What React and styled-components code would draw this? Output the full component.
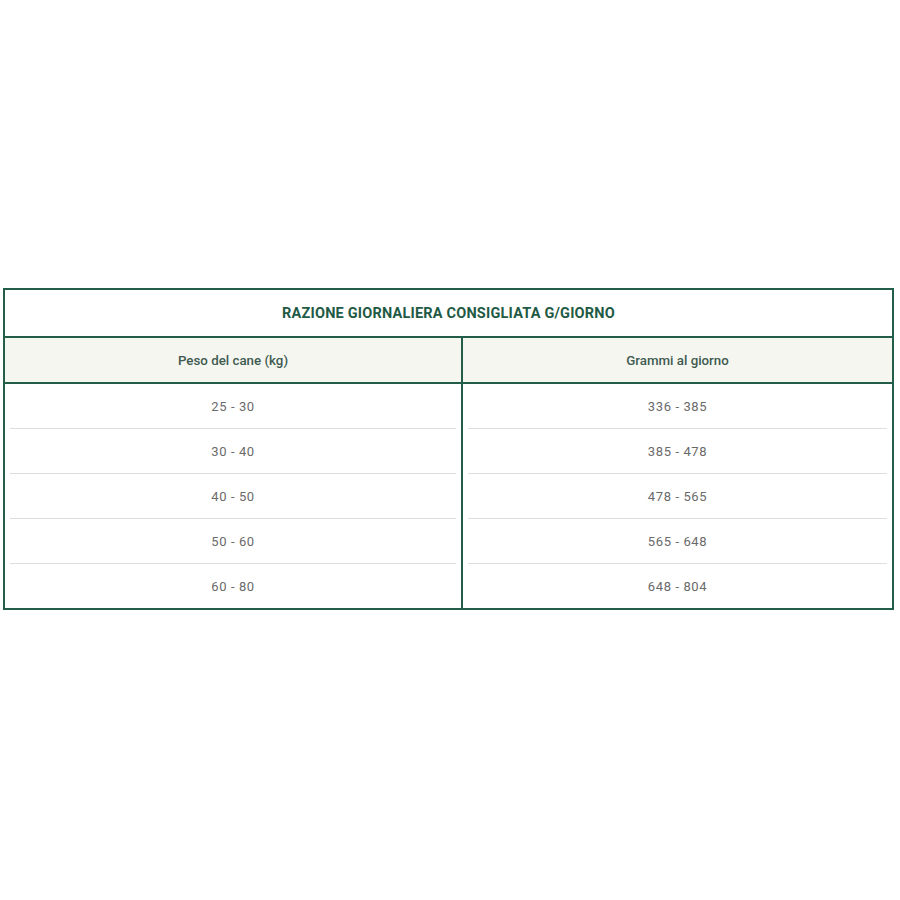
import React from 'react';
import styled, { createGlobalStyle } from 'styled-components';

const GlobalStyle = createGlobalStyle`
  body {
    margin: 0;
    background: #fff;
    font-family: Roboto, "Liberation Sans", sans-serif;
  }
`;

const Page = styled.div`
  padding: 288px 0 0 3px;
`;

const Table = styled.table`
  width: 891px;
  border-collapse: collapse;
  border: 2px solid #235e4b;
  table-layout: fixed;
`;

const LeftCol = styled.col`
  width: 458px;
`;

const Title = styled.th`
  height: 46px;
  padding: 0;
  border-bottom: 2px solid #235e4b;
  color: #1f5a45;
  font-size: 14.5px;
  font-weight: 700;
  letter-spacing: 0.2px;
  text-align: center;
`;

const Head = styled.th`
  height: 44px;
  padding: 0;
  background: #f6f6f0;
  border-bottom: 2px solid #235e4b;
  border-left: ${p => (p.$divider ? '2px solid #235e4b' : 'none')};
  color: #3e5b50;
  font-size: 13.3px;
  font-weight: 500;
  text-align: center;
`;

const Cell = styled.td`
  padding: 0 5px;
  border-left: ${p => (p.$divider ? '2px solid #235e4b' : 'none')};
`;

const CellInner = styled.div`
  height: 44px;
  display: flex;
  align-items: center;
  justify-content: center;
  border-bottom: ${p => (p.$last ? 'none' : '1px solid #dedede')};
  color: #6a6a6a;
  font-size: 13px;
  letter-spacing: 0.6px;
`;

const rows = [
  ['25 - 30', '336 - 385'],
  ['30 - 40', '385 - 478'],
  ['40 - 50', '478 - 565'],
  ['50 - 60', '565 - 648'],
  ['60 - 80', '648 - 804'],
];

export default function App() {
  return (
    <Page>
      <GlobalStyle />
      <Table>
        <colgroup>
          <LeftCol />
          <col />
        </colgroup>
        <thead>
          <tr>
            <Title colSpan={2}>RAZIONE GIORNALIERA CONSIGLIATA G/GIORNO</Title>
          </tr>
          <tr>
            <Head>Peso del cane (kg)</Head>
            <Head $divider>Grammi al giorno</Head>
          </tr>
        </thead>
        <tbody>
          {rows.map(([kg, grams], i) => (
            <tr key={kg}>
              <Cell>
                <CellInner $last={i === rows.length - 1}>{kg}</CellInner>
              </Cell>
              <Cell $divider>
                <CellInner $last={i === rows.length - 1}>{grams}</CellInner>
              </Cell>
            </tr>
          ))}
        </tbody>
      </Table>
    </Page>
  );
}
